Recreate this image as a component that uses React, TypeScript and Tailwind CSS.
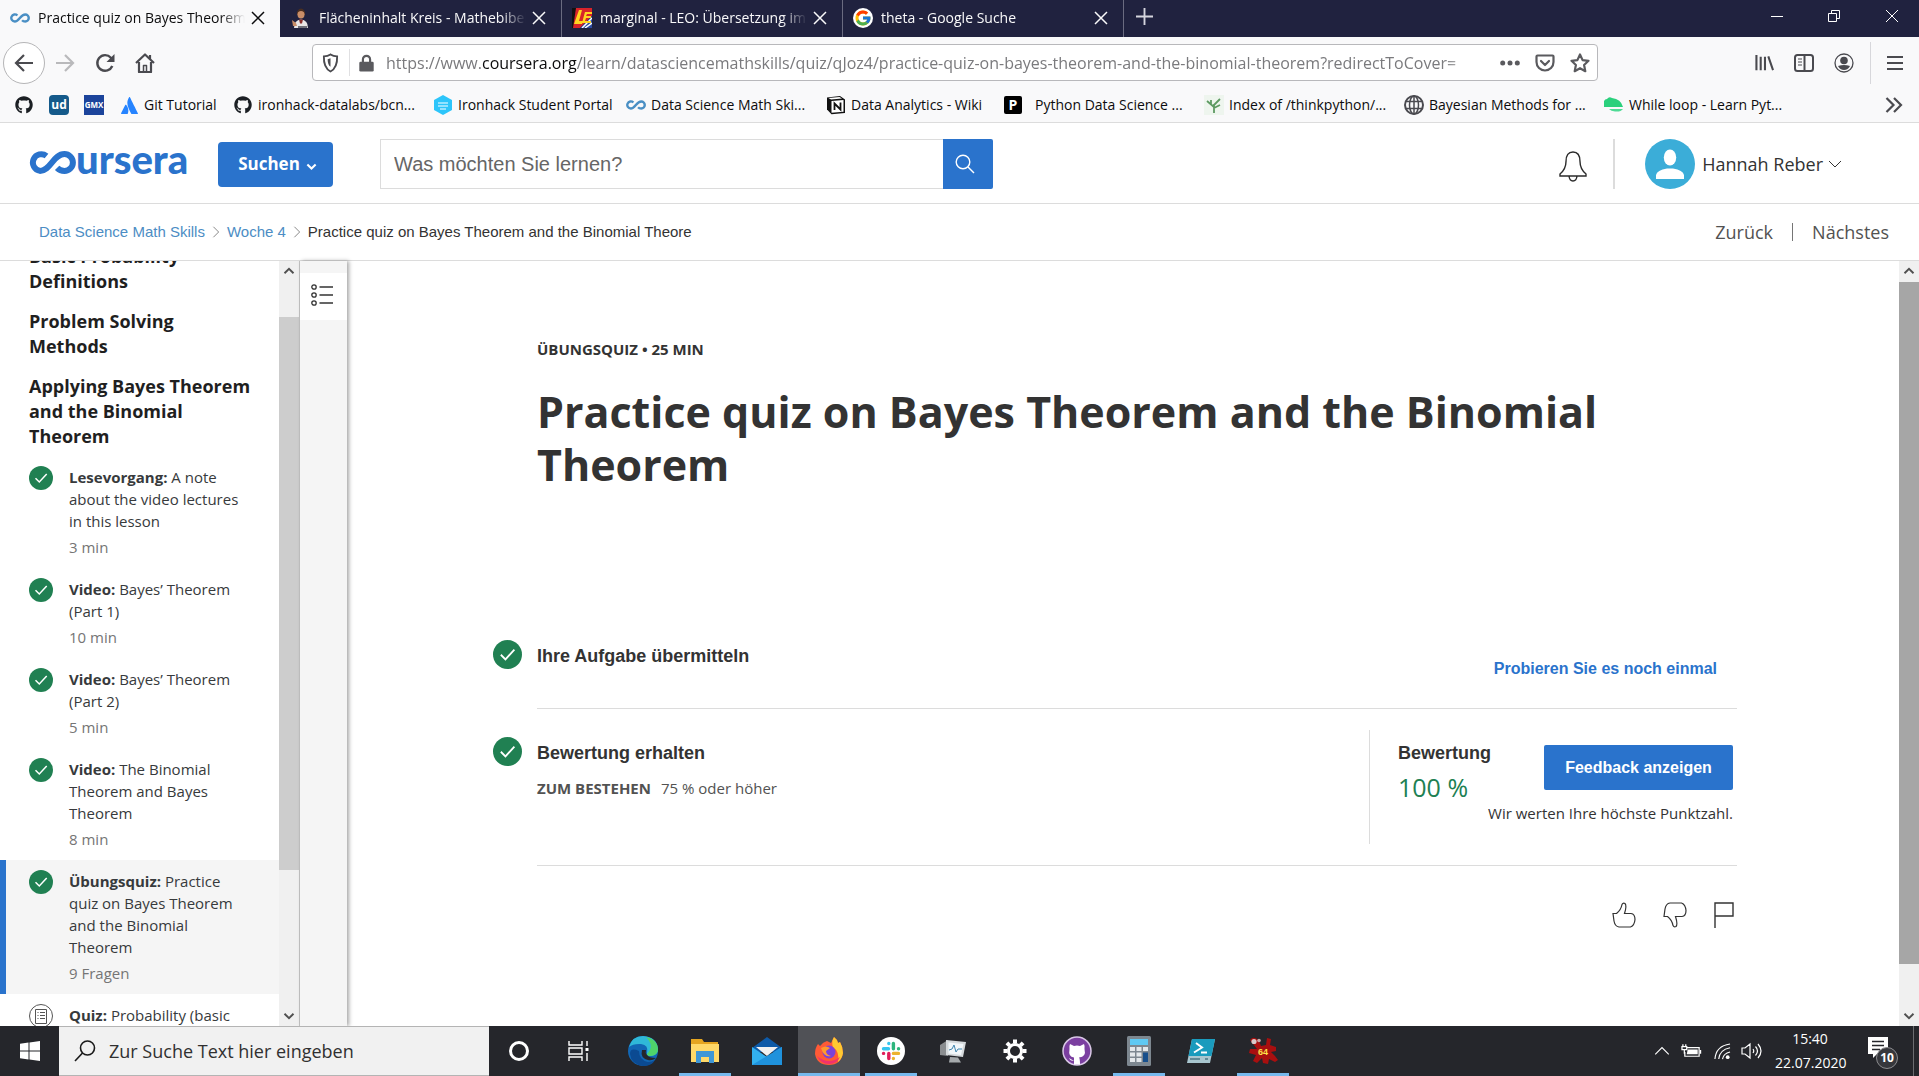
import React from "react";
import { FcGoogle } from "react-icons/fc";
import { FaGithub, FaAtlassian } from "react-icons/fa";

const UI = "font-['Open_Sans','Noto_Sans',sans-serif]";
const ARIAL = "font-['Liberation_Sans',Arial,sans-serif]";

function Infinity({ className = "" }: { className?: string }) {
  return (
    <svg viewBox="0 0 46 22" className={className} fill="none" stroke="currentColor" strokeWidth="5.500">
      <path d="M17 5.200A8.200 8.200 0 1 0 11 19.200C21.500 19.200 24 2.800 35 2.800a8.200 8.200 0 0 1 0 16.400c-3 0-5.500-1-7.200-3" />
    </svg>
  );
}

function X({ className = "" }: { className?: string }) {
  return (
    <svg viewBox="0 0 14 14" className={className} fill="none" stroke="currentColor">
      <path d="M1 1l12 12M13 1L1 13" />
    </svg>
  );
}

function Chevron({ dir, className = "" }: { dir: "up" | "down" | "right"; className?: string }) {
  const d = dir === "up" ? "M2 11l6-6 6 6" : dir === "down" ? "M2 5l6 6 6-6" : "M5 2l6 6-6 6";
  return (
    <svg viewBox="0 0 16 16" className={className} fill="none" stroke="currentColor">
      <path d={d} />
    </svg>
  );
}

function Check({ className = "" }: { className?: string }) {
  return (
    <svg viewBox="0 0 24 24" className={className}>
      <circle cx="12" cy="12" r="12" fill="#208052" />
      <path d="M6.500 12.200l3.800 3.800 7.400-8" fill="none" stroke="#fff" strokeWidth="1.500" />
    </svg>
  );
}

/* ---------- browser chrome ---------- */

const PersonIcon = () => (
  <svg viewBox="0 0 20 20" className="size-5">
    <path d="M6 4q4-4 8 0v3H6z" fill="#5b3a26" />
    <ellipse cx="10" cy="6.500" rx="3.500" ry="4" fill="#c98e68" />
    <path d="M6 6q0-5 4-5.500 4 .5 4 5.500-1-3-4-3T6 6z" fill="#4a2f20" />
    <path d="M3 20q0-8 7-8.500 7 .5 7 8.500z" fill="#e9e6e6" />
    <path d="M8 11.500h4l-1 4h-2z" fill="#8a2f2a" />
    <path d="M1 12l4 3 1 3H2z" fill="#c98e68" />
    <path d="M7 18h9v2H7z" fill="#6f6f78" />
  </svg>
);

const LeoIcon = () => (
  <svg viewBox="0 0 20 20" className="size-5">
    <path d="M0 0h9L4 20H0z" fill="#111" />
    <path d="M4 0h16v8L8 20H1z" fill="#d8232a" />
    <path d="M8 20l12-12v12z" fill="#2c4aa0" />
    <path d="M10 20L20 10M13 20l7-5" stroke="#fff" strokeWidth="1.500" />
    <path d="M7 2h3L7 13h4l-1 3H2zM13 4h7v2h-5l-1 2h5v2h-5l-1 3h6v2h-9z" fill="#ffd420" />
  </svg>
);

const tabs = [
  { title: "Practice quiz on Bayes Theorem and the Binomial Theorem", icon: <Infinity className="h-[10px] w-5 text-[#4a8fc4]" />, active: true },
  { title: "Flächeninhalt Kreis - Mathebibel.de", icon: <PersonIcon /> },
  { title: "marginal - LEO: Übersetzung im Englisch", icon: <LeoIcon /> },
  {
    title: "theta - Google Suche",
    icon: (
      <span className="flex size-5 items-center justify-center rounded-full bg-white">
        <FcGoogle size={18} />
      </span>
    ),
  },
];

function TabBar() {
  return (
    <header className="flex h-[37px] shrink-0 items-stretch bg-[#20223f]">
      <div role="tablist" className="flex">
        {tabs.map((t) => (
          <div
            key={t.title}
            className={
              "flex w-[281px] items-center border-r pb-[2px] pl-[10px] " +
              (t.active ? "border-[#20223f] bg-[#f9f9fa] text-[#0c0c0d]" : "border-[#6a6b80] text-[#f9f9fa]")
            }
          >
            {t.icon}
            <button
              role="tab"
              aria-selected={!!t.active}
              className="ml-2 h-full w-[207px] overflow-hidden whitespace-nowrap text-left text-sm [mask-image:linear-gradient(to_right,black_88%,transparent)]"
            >
              {t.title}
            </button>
            <button aria-label="Tab schließen" className="ml-[6px]">
              <X className="size-[14px] stroke-[1.500]" />
            </button>
          </div>
        ))}
      </div>
      <button aria-label="Neuer Tab" className="ml-3 text-[#d5d5de]">
        <svg viewBox="0 0 18 18" className="-mt-1 size-[17px]" stroke="currentColor" strokeWidth="2">
          <path d="M9 0v18M0 9h18" />
        </svg>
      </button>
      <div className="ml-auto flex items-start gap-11 pt-[9px] pr-5 text-white">
        <button aria-label="Minimieren" className="flex h-[14px] items-center">
          <span className="block h-px w-3 bg-white" />
        </button>
        <button aria-label="Verkleinern">
          <svg viewBox="0 0 14 14" className="size-[14px]" fill="none" stroke="currentColor">
            <path d="M1.500 4.500h8v8h-8zM4.500 4.500v-3h8v8h-3" />
          </svg>
        </button>
        <button aria-label="Schließen">
          <X className="size-[14px]" />
        </button>
      </div>
    </header>
  );
}

function NavBar() {
  return (
    <div className="flex h-[51px] shrink-0 items-center bg-[#f9f9fa] text-[#4a4a4f]">
      <div className="flex w-[312px] shrink-0 items-center pl-[3px]">
        <button aria-label="Zurück" className="flex size-[42px] items-center justify-center rounded-full border border-[#b5b5b7] bg-white">
          <svg viewBox="0 0 20 20" className="size-5" fill="none" stroke="currentColor" strokeWidth="2.200">
            <path d="M19 10H2M10 2l-8 8 8 8" />
          </svg>
        </button>
        <button aria-label="Vor" className="ml-[10px] text-[#b9b9bb]">
          <svg viewBox="0 0 20 20" className="size-5" fill="none" stroke="currentColor" strokeWidth="2.200">
            <path d="M1 10h17M10 2l8 8-8 8" />
          </svg>
        </button>
        <button aria-label="Neu laden" className="ml-5">
          <svg viewBox="0 0 20 20" className="size-5" fill="none" stroke="currentColor" strokeWidth="2.400">
            <path d="M17.300 13a7.800 7.800 0 1 1-1.400-8.300L17.500 7" />
            <path d="M19.500 1v8h-8z" fill="currentColor" stroke="none" />
          </svg>
        </button>
        <button aria-label="Startseite" className="ml-5">
          <svg viewBox="0 0 20 20" className="size-5" fill="none" stroke="currentColor" strokeWidth="2.200" strokeLinejoin="round">
            <path d="M1 10l9-8.500L19 10M4 9v10h12V9" />
            <path d="M8.500 19v-6.500h3V19" strokeWidth="1.500" />
            <path d="M15 2v4" />
          </svg>
        </button>
      </div>
      <div className="flex h-[37px] min-w-0 flex-1 items-center rounded-sm border border-[#b8b8bb] bg-white pr-[7px] pl-[9px]">
        <button aria-label="Schutz">
          <svg viewBox="0 0 18 20" className="h-5 w-[17px]" fill="none" stroke="currentColor" strokeWidth="2">
            <path d="M2 3q4 0 7-2 3 2 7 2 .5 12-7 16Q1.500 15 2 3z" />
            <path d="M9 5v9q-3-2-3-8z" fill="currentColor" stroke="none" />
          </svg>
        </button>
        <span className="ml-[10px] h-[27px] w-px bg-[#e0e0e2]" />
        <button aria-label="Verbindung sicher" className="ml-[9px]">
          <svg viewBox="0 0 16 20" className="h-[18px] w-[15px]">
            <path d="M4 9V6a4 4 0 0 1 8 0v3" fill="none" stroke="#5a5a5e" strokeWidth="2.400" />
            <rect y="8.500" width="16" height="11" rx="1.500" fill="#5a5a5e" />
          </svg>
        </button>
        <div
          role="textbox"
          aria-label="Adresse"
          tabIndex={0}
          className="ml-3 min-w-0 flex-1 overflow-hidden whitespace-nowrap text-base text-[#7a7a7d] [mask-image:linear-gradient(to_right,black_96%,transparent)]"
        >
          https://www.<span className="text-[#0c0c0d]">coursera.org</span>/learn/datasciencemathskills/quiz/qJoz4/practice-quiz-on-bayes-theorem-and-the-binomial-theorem?redirectToCover=
        </div>
        <button aria-label="Seitenaktionen" className="ml-[14px]">
          <svg viewBox="0 0 20 6" className="w-5" fill="#5a5a5e">
            <circle cx="2.700" cy="3" r="2.500" />
            <circle cx="10" cy="3" r="2.500" />
            <circle cx="17.300" cy="3" r="2.500" />
          </svg>
        </button>
        <button aria-label="Pocket" className="ml-[15px]">
          <svg viewBox="0 0 20 18" className="w-5" fill="none" stroke="#5a5a5e" strokeWidth="2.200" strokeLinejoin="round" strokeLinecap="round">
            <path d="M2.500 1.500h15q1 0 1 1V8a8.500 8.500 0 0 1-17 0V2.500q0-1 1-1z" />
            <path d="M6 7l4 4 4-4" />
          </svg>
        </button>
        <button aria-label="Lesezeichen" className="ml-[15px]">
          <svg viewBox="0 0 20 20" className="size-5" fill="none" stroke="#5a5a5e" strokeWidth="2.200" strokeLinejoin="round">
            <path d="M10 1.500l2.600 5.600 5.900.7-4.400 4.200 1.200 6.200L10 15.200l-5.300 3 1.200-6.200L1.500 7.800l5.900-.7z" />
          </svg>
        </button>
      </div>
      <div className="flex w-[321px] shrink-0 items-center pr-4 pl-[157px]">
        <button aria-label="Bibliothek">
          <svg viewBox="0 0 20 18" className="w-[19px]" stroke="currentColor" strokeWidth="2.200">
            <path d="M1.500 1v16M6 3v14M10.500 3v14M14 2.500l5 14.500" />
          </svg>
        </button>
        <button aria-label="Seitenleisten" className="ml-5">
          <svg viewBox="0 0 20 18" className="w-5" fill="none" stroke="currentColor" strokeWidth="2">
            <rect x="1" y="1" width="18" height="16" rx="2.500" />
            <path d="M10.500 1v16" />
            <path d="M4 5h4M4 8h4M4 11h4" strokeWidth="1.200" />
          </svg>
        </button>
        <button aria-label="Konto" className="ml-5">
          <svg viewBox="0 0 20 20" className="size-5">
            <circle cx="10" cy="10" r="9" fill="none" stroke="currentColor" strokeWidth="1.300" />
            <circle cx="10" cy="7.500" r="3.800" fill="currentColor" />
            <path d="M4 13q6-2 12 0-2 4-6 4t-6-4z" fill="currentColor" />
          </svg>
        </button>
        <span className="ml-4 h-[42px] w-px bg-[#d7d7db]" />
        <button aria-label="Menü" className="ml-auto">
          <svg viewBox="0 0 16 16" className="size-4" stroke="currentColor" strokeWidth="2.200">
            <path d="M0 2h16M0 8h16M0 14h16" />
          </svg>
        </button>
      </div>
    </div>
  );
}

const bookmarks: { label: string; width: string; icon: React.ReactNode; name?: string }[] = [
  { label: "", name: "GitHub", width: "w-[35px]", icon: <FaGithub size={18} color="#1b1f23" /> },
  {
    label: "",
    name: "Udacity",
    width: "w-[35px]",
    icon: <span className="flex size-5 items-center justify-center rounded-sm bg-[#155a8a] text-xs font-bold leading-none text-white">ud</span>,
  },
  {
    label: "",
    name: "GMX",
    width: "w-[35px]",
    icon: <span className="flex size-5 items-center justify-center bg-[#1c449b] text-[8px] font-bold leading-none text-white">GMX</span>,
  },
  { label: "Git Tutorial", width: "w-[114px]", icon: <FaAtlassian size={17} color="#2684ff" /> },
  { label: "ironhack-datalabs/bcn...", width: "w-[200px]", icon: <FaGithub size={18} color="#1b1f23" /> },
  {
    label: "Ironhack Student Portal",
    width: "w-[193px]",
    icon: (
      <svg viewBox="0 0 20 20" className="size-5">
        <path d="M10 0l9 5v10l-9 5-9-5V5z" fill="#2dc5fa" />
        <path d="M5 8h10M5 11h10M7 14h6" stroke="#b5ecff" strokeWidth="1.400" />
      </svg>
    ),
  },
  { label: "Data Science Math Ski...", width: "w-[200px]", icon: <Infinity className="h-[10px] w-5 text-[#4a8fc4]" /> },
  {
    label: "Data Analytics - Wiki",
    width: "w-[178px]",
    icon: (
      <svg viewBox="0 0 20 20" className="size-5">
        <path d="M1 2.500L14 1l5 3.500V18l-13.500 1.200L1 14.500z" fill="#111" />
        <path d="M5.500 6L17.500 5v11.800l-12 .9z" fill="#fff" />
        <path d="M8.500 15V8.500l6 6V7.500" fill="none" stroke="#111" strokeWidth="1.800" />
        <path d="M2.500 3l11-1 2.500 1.500-11 1z" fill="#fff" />
      </svg>
    ),
  },
  {
    label: "Python Data Science ...",
    width: "w-[200px]",
    icon: (
      <span className="mr-2 flex size-[18px] items-center justify-center rounded-xs bg-black text-sm font-bold leading-none text-white">P</span>
    ),
  },
  {
    label: "Index of /thinkpython/...",
    width: "w-[200px]",
    icon: (
      <svg viewBox="0 0 20 20" className="size-5" fill="none" stroke="#5d9a62" strokeWidth="1.800">
        <rect width="20" height="20" fill="#eef5ee" stroke="none" />
        <path d="M10 18V9M10 12L3 6M10 10l6-6M10 13l6-3M7 9V5" />
      </svg>
    ),
  },
  {
    label: "Bayesian Methods for ...",
    width: "w-[200px]",
    icon: (
      <svg viewBox="0 0 20 20" className="size-5" fill="none" stroke="#4a4a4f" strokeWidth="1.500">
        <circle cx="10" cy="10" r="9" strokeWidth="2" />
        <ellipse cx="10" cy="10" rx="4.500" ry="9" />
        <path d="M10 1v18M2 6.500h16M2 13.500h16" />
      </svg>
    ),
  },
  {
    label: "While loop - Learn Pyt...",
    width: "w-[200px]",
    icon: (
      <svg viewBox="0 0 20 20" className="size-5">
        <path d="M0 11V6q1-2 3-2 2-3 5-1 9 1 11 9H0z" fill="#2ad07c" />
        <path d="M5 14h14q-2 3-8 2.500Q7 16 5 14z" fill="#4edb95" />
      </svg>
    ),
  },
];

function BookmarksBar() {
  return (
    <nav aria-label="Lesezeichen" className="flex h-[35px] shrink-0 items-center border-b border-[#dcdcdc] bg-[#f9f9fa] pr-4 pl-[14px] text-sm text-[#0c0c0d]">
      {bookmarks.map((b) => (
        <a key={b.name || b.label} href="#" aria-label={b.name || b.label} className={"flex shrink-0 items-center gap-[5px] whitespace-nowrap " + b.width}>
          <span className="flex min-w-5 shrink-0 items-center justify-center">{b.icon}</span>
          {b.label}
        </a>
      ))}
      <button aria-label="Weitere Lesezeichen" className="ml-auto">
        <svg viewBox="0 0 18 16" className="w-[18px]" fill="none" stroke="#4a4a4f" strokeWidth="2.200">
          <path d="M1.500 1l7 7-7 7M9 1l7 7-7 7" />
        </svg>
      </button>
    </nav>
  );
}

/* ---------- page header ---------- */

function SiteHeader() {
  return (
    <div className="flex h-[81px] shrink-0 items-center border-b border-[#dcdcdc] pt-[2px] pr-[76px] pl-[29px]">
      <a href="#" aria-label="Coursera" className="w-[160px] text-[#2a73cc]">
        <svg viewBox="0 0 160 50" className="block h-[50px] w-[160px]">
          <path
            d="M17.500 15A8.400 8.400 0 1 0 11 29.900C21.500 29.900 24 13.100 35.500 13.100a8.400 8.400 0 0 1 0 16.800c-3 0-5.500-1-7.400-3"
            fill="none"
            stroke="currentColor"
            strokeWidth="6"
            transform="translate(0 2)"
          />
          <text x="47" y="35" fill="currentColor" fontFamily="Lato, sans-serif" fontWeight="900" fontSize="40">
            ursera
          </text>
        </svg>
      </a>
      <button className="ml-[29px] flex h-[45px] w-[115px] items-center justify-center gap-[6px] rounded-sm bg-[#2a73cc] pl-1 text-[17px] font-bold text-white">
        Suchen
        <Chevron dir="down" className="mt-1 size-[11px] stroke-[3]" />
      </button>
      <form className="ml-[47px] flex w-[613px]" onSubmit={(e) => e.preventDefault()}>
        <input
          aria-label="Was möchten Sie lernen?"
          placeholder="Was möchten Sie lernen?"
          className={"h-[50px] min-w-0 flex-1 border border-r-0 border-[#dcdcdc] px-[13px] text-xl text-[#333] outline-none placeholder:text-[#666] " + ARIAL}
        />
        <button aria-label="Suche starten" className="flex h-[50px] w-[50px] items-center justify-center rounded-r-xs bg-[#2a73cc] pr-[6px] text-white">
          <svg viewBox="0 0 20 20" className="size-5" fill="none" stroke="currentColor" strokeWidth="1.400">
            <circle cx="8" cy="8" r="6.800" />
            <path d="M13 13l6 6" />
          </svg>
        </button>
      </form>
      <button aria-label="Benachrichtigungen" className="mt-1 ml-auto">
        <svg viewBox="0 0 28 31" className="h-[31px] w-7" fill="none" stroke="#2b2b2b" strokeWidth="1.400">
          <path d="M1 25v-2q6-5 6-12.500Q7 1 14 1t7 9.500Q21 18 27 23v2zM10 25q.5 5 4 5t4-5" />
        </svg>
      </button>
      <span className="ml-[26px] h-[50px] w-[2px] bg-[#dcdcdc]" />
      <button className="ml-[30px] flex items-center text-lg text-[#333]">
        <svg viewBox="0 0 50 50" className="size-[50px]">
          <circle cx="25" cy="25" r="25" fill="#3badd8" />
          <ellipse cx="25" cy="18.500" rx="6.200" ry="8" fill="#fff" />
          <path d="M11 40v-4q1-5 11-6.500h6q10 1.500 11 6.500v4z" fill="#fff" />
        </svg>
        <span className="ml-[7px]">Hannah Reber</span>
        <Chevron dir="down" className="ml-1 size-4" />
      </button>
    </div>
  );
}

function Breadcrumb() {
  return (
    <div className="flex h-[57px] shrink-0 items-center border-b border-[#dcdcdc] pr-[30px] pl-[39px]">
      <nav aria-label="Brotkrumen" className={"flex items-center gap-1 text-[15px] text-[#333] " + ARIAL}>
        <a href="#" className="text-[#4c8dc4]">Data Science Math Skills</a>
        <Chevron dir="right" className="size-[14px] text-[#777]" />
        <a href="#" className="text-[#4c8dc4]">Woche 4</a>
        <Chevron dir="right" className="size-[14px] text-[#777]" />
        <span>Practice quiz on Bayes Theorem and the Binomial Theore</span>
      </nav>
      <div className="ml-auto flex items-center gap-[19px] text-lg text-[#525252]">
        <a href="#">Zurück</a>
        <span className="h-[18px] w-px bg-[#757575]" />
        <a href="#">Nächstes</a>
      </div>
    </div>
  );
}

/* ---------- sidebar ---------- */

const sections = ["Basic Probability Definitions", "Problem Solving Methods", "Applying Bayes Theorem and the Binomial Theorem"];

const items = [
  { kind: "Lesevorgang:", title: "A note about the video lectures in this lesson", meta: "3 min", done: true },
  { kind: "Video:", title: "Bayes’ Theorem (Part 1)", meta: "10 min", done: true },
  { kind: "Video:", title: "Bayes’ Theorem (Part 2)", meta: "5 min", done: true },
  { kind: "Video:", title: "The Binomial Theorem and Bayes Theorem", meta: "8 min", done: true },
  { kind: "Übungsquiz:", title: "Practice quiz on Bayes Theorem and the Binomial Theorem", meta: "9 Fragen", done: true, current: true },
  { kind: "Quiz:", title: "Probability (basic and Intermediate)", meta: "12 Fragen" },
];

function ScrollBar({ thumb, before, after }: { thumb: string; before: string; after: string }) {
  return (
    <div className="flex w-5 shrink-0 flex-col items-center bg-[#f0f0f0] text-[#505050]">
      <Chevron dir="up" className="mt-1 size-3 shrink-0 stroke-[2.500]" />
      <span className={before} />
      <span className={"w-full " + thumb} />
      <span className={after} />
      <Chevron dir="down" className="mb-1 size-3 shrink-0 stroke-[2.500]" />
    </div>
  );
}

function Sidebar() {
  return (
    <aside className="flex w-[300px] shrink-0 border-r border-[#c4c4c4]">
      <div className="min-w-0 flex-1 overflow-hidden">
        <div className="-mt-[17px] flex flex-col gap-[15px] pr-[26px] pb-[7px] pl-[29px]">
          {sections.map((s) => (
            <h2 key={s} className="text-lg leading-[25px] font-bold text-[#1f1f1f]">
              {s}
            </h2>
          ))}
        </div>
        <ul className="text-[15px] leading-[22px] text-[#373a3c]">
          {items.map((it) => (
            <li key={it.title}>
              <a
                href="#"
                className={"flex items-start gap-4 border-l-6 py-[10px] pr-[34px] pl-[23px] " + (it.current ? "border-[#2a73cc] bg-[#f5f5f5]" : "border-transparent")}
              >
                {it.done ? (
                  <Check className="size-6 shrink-0" />
                ) : (
                  <svg viewBox="0 0 24 24" className="size-6 shrink-0" fill="none" stroke="#555">
                    <circle cx="12" cy="12" r="11.500" />
                    <path d="M6.500 5.500h11v14h-11zM8.500 8.500h1M8.500 11.500h1M8.500 14.500h1M11 8.500h5M11 11.500h5M11 14.500h5" />
                  </svg>
                )}
                <span>
                  <strong>{it.kind}</strong> {it.title}
                  <span className="mt-1 block text-[#757575]">{it.meta}</span>
                </span>
              </a>
            </li>
          ))}
        </ul>
      </div>
      <ScrollBar thumb="flex-1 bg-[#cdcdcd]" before="h-10 shrink-0" after="h-[140px] shrink-0" />
    </aside>
  );
}

/* ---------- main ---------- */

function Main() {
  return (
    <main className="min-w-0 flex-1 pt-[77px] pr-[162px] pl-[190px] text-[#333]">
      <p className="text-[15px] leading-[22px] font-bold">ÜBUNGSQUIZ • 25 MIN</p>
      <h1 className="mt-[25px] text-[43px] leading-[53px] font-bold">Practice quiz on Bayes Theorem and the Binomial Theorem</h1>

      <section className="relative mt-[134px] flex h-[84px] items-start border-b border-[#dcdcdc]">
        <Check className="absolute top-[15px] -left-11 size-[29px]" />
        <h2 className={"pt-[18px] text-lg leading-[27px] font-bold " + ARIAL}>Ihre Aufgabe übermitteln</h2>
        <button className={"mt-8 mr-5 ml-auto text-base leading-6 font-bold text-[#2a73cc] " + ARIAL}>Probieren Sie es noch einmal</button>
      </section>

      <section className="relative flex h-[157px] items-start border-b border-[#dcdcdc]">
        <Check className="absolute top-7 -left-11 size-[29px]" />
        <div className="pt-[31px]">
          <h2 className={"text-lg leading-[27px] font-bold " + ARIAL}>Bewertung erhalten</h2>
          <p className="mt-[10px] text-[15px] leading-[22px] text-[#525252]">
            <strong className="mr-[10px]">ZUM BESTEHEN</strong>75 % oder höher
          </p>
        </div>
        <div className="mt-[21px] ml-auto flex h-[114px] w-[368px] border-l border-[#dcdcdc] pl-7">
          <div className="pt-[10px]">
            <h3 className={"text-lg leading-[27px] font-bold " + ARIAL}>Bewertung</h3>
            <p className="mt-1 text-[25px] leading-8 text-[#208052]">100 %</p>
          </div>
          <div className="-ml-4 flex flex-1 flex-col items-end pt-[15px] pr-1">
            <button className={"h-[45px] w-[189px] rounded-xs bg-[#2a73cc] text-base font-bold text-white " + ARIAL}>Feedback anzeigen</button>
            <p className="mt-3 text-[15px] leading-[22px] whitespace-nowrap">Wir werten Ihre höchste Punktzahl.</p>
          </div>
        </div>
      </section>

      <div className="mt-9 flex items-center justify-end gap-[27px] pr-[3px] text-[#333]">
        <button aria-label="Gefällt mir">
          <svg viewBox="0 0 24 26" className="h-[26px] w-6" fill="none" stroke="currentColor" strokeWidth="1.200">
            <path d="M1 11.500h3.500Q9 8 10 2.500q1-2 3-1 2 2-.5 10h6.500q4 .5 4 6-.5 6-4.500 7.500H7Q3 24.500 2 19z" />
          </svg>
        </button>
        <button aria-label="Gefällt mir nicht">
          <svg viewBox="0 0 24 26" className="h-[26px] w-6" fill="none" stroke="currentColor" strokeWidth="1.200">
            <path d="M1 14.500h3.500Q9 18 10 23.500q1 2 3 1 2-2-.5-10h6.500q4-.5 4-6-.5-6-4.500-7.500H7Q3 1.500 2 7z" />
          </svg>
        </button>
        <button aria-label="Melden">
          <svg viewBox="0 0 20 26" className="h-[26px] w-5" fill="none" stroke="currentColor" strokeWidth="1.400">
            <path d="M1 26V1h18v13H1" />
          </svg>
        </button>
      </div>
    </main>
  );
}

/* ---------- taskbar ---------- */

const apps: { name: string; open?: boolean; active?: boolean; icon: React.ReactNode }[] = [
  {
    name: "Edge",
    icon: (
      <svg viewBox="0 0 30 30" className="size-[30px]">
        <circle cx="15" cy="15" r="15" fill="#1266b4" />
        <path d="M1 11Q4 0 15 0q14 1 15 13 0 6-7 7-5 0-4-3 2-8-6-9Q5 7.500 1 11z" fill="#2fb8d8" />
        <path d="M18 1q11 2 12 12 0 6-7 7-4 0-4-2 8-8-1-17z" fill="#4fd36a" />
        <path d="M11 15q0 9 9 11 4 0 7-2-3 6-12 6Q3 28 2 18q0-7 9-3z" fill="#0b4a92" />
        <path d="M14 14q-2 8 6 10 4 1 8-2-7 0-9-3-2-2-1-5z" fill="#25262b" />
      </svg>
    ),
  },
  {
    name: "Explorer",
    open: true,
    icon: (
      <svg viewBox="0 0 30 26" className="h-[26px] w-[30px]">
        <path d="M1 1h11l2 3h14v20H1z" fill="#e5a520" />
        <path d="M1 6h28v18H1z" fill="#ffd969" />
        <path d="M6 13h18v12h-5v-6h-8v6H6z" fill="#3f97d6" />
      </svg>
    ),
  },
  {
    name: "Mail",
    icon: (
      <svg viewBox="0 0 30 28" className="h-[28px] w-[30px]">
        <path d="M0 11L15 0l15 11v4H0z" fill="#0d5aa8" />
        <path d="M4 10h22l-11 9z" fill="#f1f1f1" />
        <path d="M0 10l15 10L30 10v18H0z" fill="#32b1f0" />
        <path d="M0 28l30-18v18z" fill="#1f92dd" />
      </svg>
    ),
  },
  {
    name: "Firefox",
    open: true,
    active: true,
    icon: (
      <svg viewBox="0 0 30 30" className="size-[30px]">
        <path d="M4 8l2 2q3-4 7-5l4 2L20 1q3 2 4 6l2-1q3 5 3 11-2 12-14 12T1 18Q1 12 4 8z" fill="#ff5a36" />
        <path d="M20 1q3 2 4 6l2-1q3 5 3 11-1 6-5 9 2-10-5-15-2-5 1-10z" fill="#ffc931" />
        <path d="M3 20q4 8 12 8t11-7q-5 4-11 4T3 20z" fill="#f0326e" />
        <circle cx="15" cy="16" r="6.500" fill="#7b42d8" />
        <path d="M7 12q5-3 9 0l-4 3q0 4 5 5-7 2-10-8z" fill="#ff9a2c" />
      </svg>
    ),
  },
  {
    name: "Slack",
    open: true,
    icon: (
      <svg viewBox="0 0 28 28" className="size-7" strokeWidth="3.400" strokeLinecap="round">
        <circle cx="14" cy="14" r="14" fill="#fff" />
        <path d="M6.500 11.800h5M11.800 6.500v.1" stroke="#36c5f0" />
        <path d="M16.400 6.500v5.300M21.500 11.800h.1" stroke="#2eb67d" />
        <path d="M16.400 16.400h5.100M16.400 21.500v.1" stroke="#ecb22e" />
        <path d="M11.800 16.400v5.100M6.500 16.400h.1" stroke="#e01e5a" />
      </svg>
    ),
  },
  {
    name: "Ressourcenmonitor",
    icon: (
      <svg viewBox="0 0 28 26" className="h-[26px] w-7">
        <path d="M1 7l8-5v16l-8-1z" fill="#8a8d90" />
        <path d="M7 2l20 2-3 15-17-2z" fill="#d5d9dc" />
        <path d="M9.500 4.500l15 1.500-2.500 11-12.500-1.500z" fill="#f2f7fa" />
        <path d="M10 12l3-1 2-4 2 7 2-3h4" fill="none" stroke="#4186b0" />
        <path d="M11 19l8 .5 3 5H10z" fill="#a5a9ac" />
      </svg>
    ),
  },
  {
    name: "Einstellungen",
    icon: (
      <svg viewBox="0 0 24 24" className="size-6" fill="none" stroke="#fff">
        <circle cx="12" cy="12" r="6.500" strokeWidth="3" />
        <path d="M12 .5v4M12 19.500v4M.5 12h4M19.500 12h4M3.900 3.900l2.800 2.800M17.300 17.300l2.800 2.800M20.100 3.900l-2.800 2.800M6.700 17.300l-2.800 2.800" strokeWidth="4" />
      </svg>
    ),
  },
  {
    name: "GitHub Desktop",
    icon: (
      <svg viewBox="0 0 30 30" className="size-[30px]">
        <circle cx="15" cy="15" r="14" fill="#7b3fa0" stroke="#d9c7e6" strokeWidth="1.500" />
        <path d="M8 8l4 2q3-1 6 0l4-2q1 2 .5 5 2 8-5.500 8.500 1 1 1 7h-6v-7Q6 21 7.500 13 7 10 8 8zM12 25q-4 0-5-3" fill="#fff" />
      </svg>
    ),
  },
  {
    name: "Rechner",
    open: true,
    icon: (
      <svg viewBox="0 0 24 30" className="h-[30px] w-6">
        <rect width="24" height="30" rx="1.500" fill="#7d8790" />
        <path d="M3 3h18v6H3z" fill="#5fc9f3" />
        <path d="M3 11h5v4H3zM9.500 11h5v4h-5zM16 11h5v4h-5zM3 16.500h5v4H3zM9.500 16.500h5v4h-5zM3 22h5v4H3zM9.500 22h5v4h-5z" fill="#e4e8eb" />
        <path d="M16 16.500h5V26h-5z" fill="#174f8c" />
      </svg>
    ),
  },
  {
    name: "PowerShell ISE",
    icon: (
      <svg viewBox="0 0 30 24" className="h-[24px] w-[30px]">
        <path d="M6 0h23l-5 24H1z" fill="#a9c6cf" />
        <path d="M6 0h23l-3.500 17H2.500z" fill="#1a9bbd" />
        <path d="M10 4l6 4.500-8 5M15 13.500h6" fill="none" stroke="#fff" strokeWidth="2" />
        <path d="M4 20h10M19 20h3" stroke="#4b7684" strokeWidth="1.500" />
      </svg>
    ),
  },
  {
    name: "G64",
    open: true,
    icon: (
      <svg viewBox="0 0 30 28" className="h-[28px] w-[30px]">
        <path d="M2 3q4-5 9 1l2 5 5-1 1-7 4 1-1 6 6 2v4l-5 1 4 4 3 4-3 2-6-3-1 5-5-1-1-5-5 5-4-2 3-6-7-2 1-4 7 0z" fill="#a80f0f" />
        <circle cx="6" cy="4.500" r="2.600" fill="#d9c9c9" />
        <circle cx="11" cy="3.500" r="1.800" fill="#c9a9a9" />
        <text x="10" y="18" fontSize="9" fontWeight="700" fill="#ffe14a" fontFamily="Liberation Sans, sans-serif">
          64
        </text>
      </svg>
    ),
  },
];

function Taskbar() {
  return (
    <footer className="flex h-[50px] shrink-0 items-stretch bg-[#25262b] text-white">
      <button aria-label="Start" className="flex w-[59px] items-center justify-center">
        <svg viewBox="0 0 20 20" className="size-5" fill="#fff">
          <path d="M0 2.800l8.500-1.200v8H0zM9.500 1.400L20 0v9.600H9.500zM0 10.500h8.500v8L0 17.300zM9.500 10.500H20V20L9.500 18.600z" />
        </svg>
      </button>
      <label className="flex w-[430px] items-center border-y border-[#b4b4b4] bg-[#f1f1f1] pl-[15px]">
        <svg viewBox="0 0 22 22" className="size-[22px] shrink-0" fill="none" stroke="#1a1a1a" strokeWidth="1.600">
          <circle cx="13.500" cy="8" r="7" />
          <path d="M8.500 13L1 21" />
        </svg>
        <input
          aria-label="Windows-Suche"
          placeholder="Zur Suche Text hier eingeben"
          className="ml-[13px] min-w-0 flex-1 bg-transparent text-lg outline-none placeholder:text-[#303030]"
        />
      </label>
      <button aria-label="Cortana" className="flex w-[60px] items-center justify-center">
        <span className="size-5 rounded-full border-3 border-white" />
      </button>
      <button aria-label="Aktive Anwendungen" className="mr-[3px] flex w-[60px] items-center justify-center">
        <svg viewBox="0 0 22 20" className="h-5 w-[22px]" fill="none" stroke="#fff" strokeWidth="1.400">
          <path d="M1 0v4h13V0M1 20v-4h13v4M1 7h13v6H1zM19 0v5M19 12v8" />
          <path d="M17.500 7h3v3h-3z" fill="#fff" stroke="none" />
        </svg>
      </button>
      {apps.map((a) => (
        <button key={a.name} aria-label={a.name} className={"relative flex w-[62px] items-center justify-center " + (a.active ? "bg-[#505156]" : "")}>
          {a.icon}
          {a.open && <span className={"absolute bottom-0 h-[3px] bg-[#76b9ed] " + (a.active ? "inset-x-0" : "inset-x-[5px]")} />}
        </button>
      ))}
      <div className="ml-auto flex items-center">
        <button aria-label="Ausgeblendete Symbole">
          <Chevron dir="up" className="size-[18px]" />
        </button>
        <svg viewBox="0 0 22 16" className="ml-[10px] h-4 w-[21px]" fill="none" stroke="#fff" strokeWidth="1.300">
          <path d="M6 4.500h13v9H4V9M20.500 7v4M1 3.500h5v3H1zM2 1v2M5 1v2M3.500 7v4" />
          <path d="M7 6.500h10.500v5H6z" fill="#fff" stroke="none" />
        </svg>
        <svg viewBox="0 0 18 18" className="ml-3 size-[17px]" fill="none" stroke="#fff" strokeWidth="1.200">
          <path d="M1 17Q2 3 17 1M5 17Q6 7 17 5M9 17q1-6 8-7.500" />
          <circle cx="14.500" cy="15" r="2" fill="#fff" stroke="none" />
        </svg>
        <svg viewBox="0 0 22 18" className="ml-[10px] h-[18px] w-[22px]" fill="none" stroke="#fff" strokeWidth="1.200">
          <path d="M1 6h3l5-4v14l-5-4H1zM12 7q1.500 2 0 4M14.500 4.500q4 4.500 0 9M17 2q6 7 0 14" />
        </svg>
        <time className="ml-3 w-[70px] text-center text-sm leading-6">
          15:40
          <br />
          22.07.2020
        </time>
        <button aria-label="Benachrichtigungen, 10 neu" className="relative ml-[23px] h-9 w-[30px]">
          <svg viewBox="0 0 20 22" className="absolute top-1 left-0 h-[22px] w-5">
            <path d="M0 0h20v17H9l-4 4v-4H0z" fill="#fff" />
            <path d="M4 4.500h12M4 8.500h12M4 12.500h8" stroke="#25262b" strokeWidth="1.300" />
          </svg>
          <span className="absolute right-0 bottom-0 flex size-[22px] items-center justify-center rounded-full border border-[#8c8c8f] bg-[#36373c] text-xs leading-none font-bold">10</span>
        </button>
        <span className="mr-[5px] ml-[15px] h-[50px] w-px bg-[#6b6c70]" />
      </div>
    </footer>
  );
}

export default function App() {
  return (
    <div className={"flex h-screen flex-col overflow-hidden bg-white " + UI}>
      <TabBar />
      <NavBar />
      <BookmarksBar />
      <SiteHeader />
      <Breadcrumb />
      <div className="flex min-h-0 flex-1">
        <Sidebar />
        <div className="w-[47px] shrink-0 bg-[#f5f5f5] pt-3 shadow-[2px_0_4px_rgba(0,0,0,0.35)]">
          <button aria-label="Menü ein- oder ausblenden" className="flex h-[47px] w-full items-center justify-center bg-white pr-1 pb-[3px]">
            <svg viewBox="0 0 22 22" className="size-[22px]" fill="none" stroke="#333" strokeWidth="1.300">
              <circle cx="3" cy="3" r="2.200" />
              <circle cx="3" cy="11" r="2.200" />
              <circle cx="3" cy="19" r="2.200" />
              <path d="M8.500 3H22M8.500 11H22M8.500 19H22" />
            </svg>
          </button>
        </div>
        <Main />
        <ScrollBar thumb="flex-1 bg-[#a6a6a6]" before="h-[5px] shrink-0" after="h-[46px] shrink-0" />
      </div>
      <Taskbar />
    </div>
  );
}
